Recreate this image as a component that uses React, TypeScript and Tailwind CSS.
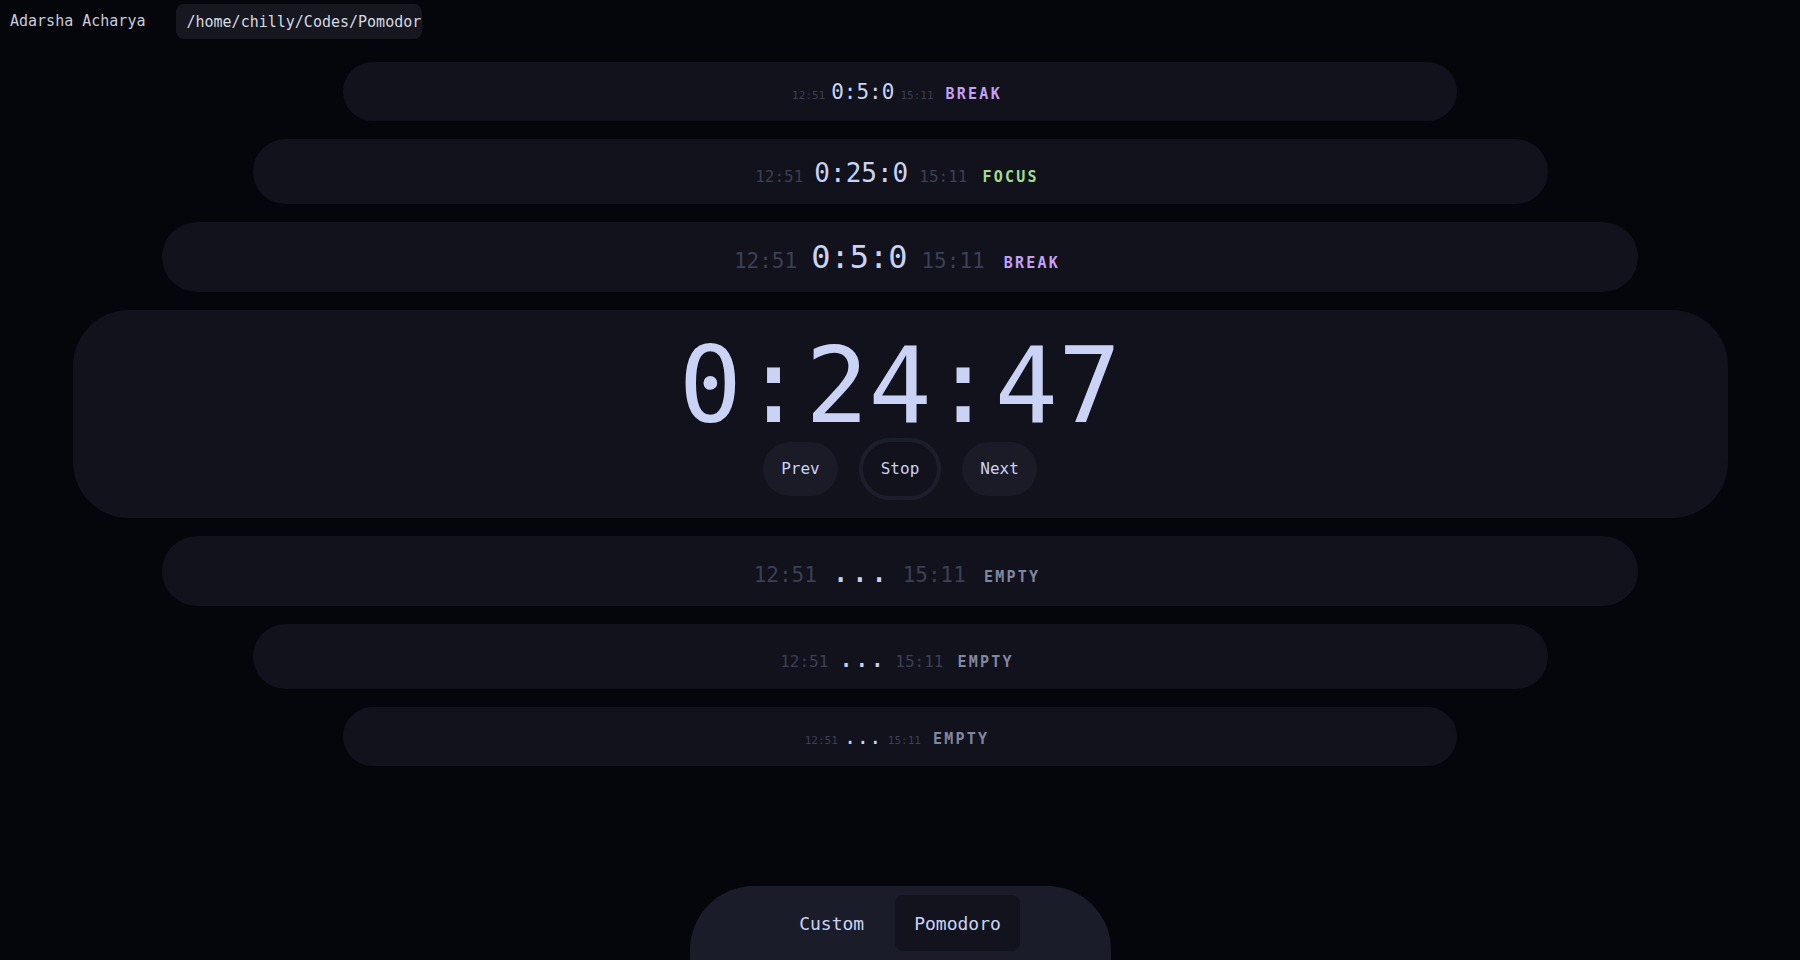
import React from "react";

type RowProps = {
  w: string;
  h: string;
  small: string;
  big: string;
  gap: string;
  center: string;
  label: string;
  labelColor: string;
  labelGap: string;
};

function Row({ w, h, small, big, gap, center, label, labelColor, labelGap }: RowProps) {
  return (
    <div className={`${w} ${h} rounded-full bg-[#11121b] flex items-center justify-center pt-[5px] pr-[6px]`}>
      <div className={`flex items-baseline ${gap}`}>
        <span className={`${small} text-[#3b3f57]`}>12:51</span>
        <span className={`${big} text-[#cad3f5] leading-none`}>{center}</span>
        <span className={`${small} text-[#3b3f57]`}>15:11</span>
        <span className={`${labelGap} text-[15px] font-bold tracking-[0.15em] ${labelColor}`}>{label}</span>
      </div>
    </div>
  );
}

export default function App() {
  return (
    <div className="h-screen w-full overflow-hidden bg-[#05060c] flex flex-col font-['DejaVu_Sans_Mono',monospace]">
      <header className="flex items-center gap-[31px] pl-[10px] pt-[4px]">
        <span className="text-[15px] text-[#c9ccd8]">Adarsha Acharya</span>
        <input
          readOnly
          value="/home/chilly/Codes/Pomodoro"
          className="w-[246px] h-[35px] rounded-[8px] bg-[#17181f] pl-[10px] text-[15px] text-[#d5d8e2] outline-none"
        />
      </header>

      <main className="flex flex-col items-center gap-[18px] mt-[23px]">
        <Row w="w-[1114px]" h="h-[59px]" small="text-[11px]" big="text-[21px]" gap="gap-[6px]" center="0:5:0" label="BREAK" labelColor="text-[#c6a0f6]" labelGap="ml-[6px]" />
        <Row w="w-[1295px]" h="h-[65px]" small="text-[16px]" big="text-[26px]" gap="gap-[11px]" center="0:25:0" label="FOCUS" labelColor="text-[#a6da95]" labelGap="ml-[4px]" />
        <Row w="w-[1476px]" h="h-[70px]" small="text-[21px]" big="text-[32px]" gap="gap-[14px]" center="0:5:0" label="BREAK" labelColor="text-[#c6a0f6]" labelGap="ml-[5px]" />

        <section className="w-[1655px] h-[208px] rounded-[56px] bg-[#11121b] flex flex-col items-center pt-[24px]">
          <div className="text-[105px] leading-none text-[#cad3f5]">0:24:47</div>
          <div className="-mt-[1px] flex items-center gap-[21px]">
            <button className="h-[54px] px-[18px] rounded-full bg-[#1a1b27] text-[16px] text-[#cad3f5]">Prev</button>
            <button className="h-[62px] px-[18px] rounded-full border-4 border-[#1c1e2c] text-[16px] text-[#cad3f5]">Stop</button>
            <button className="h-[54px] px-[18px] rounded-full bg-[#1a1b27] text-[16px] text-[#cad3f5]">Next</button>
          </div>
        </section>

        <Row w="w-[1476px]" h="h-[70px]" small="text-[21px]" big="text-[32px]" gap="gap-[14px]" center="..." label="EMPTY" labelColor="text-[#8087a2]" labelGap="ml-[4px]" />
        <Row w="w-[1295px]" h="h-[65px]" small="text-[16px]" big="text-[26px]" gap="gap-[10px]" center="..." label="EMPTY" labelColor="text-[#8087a2]" labelGap="ml-[4px]" />
        <Row w="w-[1114px]" h="h-[59px]" small="text-[11px]" big="text-[21px]" gap="gap-[6px]" center="..." label="EMPTY" labelColor="text-[#8087a2]" labelGap="ml-[6px]" />
      </main>

      <nav className="mt-auto self-center w-[421px] h-[74px] rounded-t-[64px] bg-[#1b1c29] flex items-start justify-center gap-[12px] pt-[9px]">
        <button className="h-[56px] px-[19px] rounded-[8px] text-[18px] text-[#cad3f5]">Custom</button>
        <button className="h-[56px] px-[19px] rounded-[8px] bg-[#12131c] text-[18px] text-[#cad3f5]">Pomodoro</button>
      </nav>
    </div>
  );
}
